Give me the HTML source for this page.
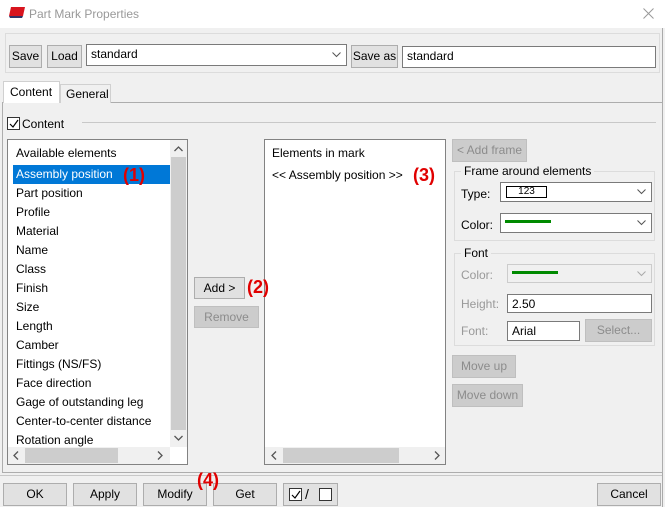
<!DOCTYPE html>
<html><head><meta charset="utf-8"><style>
*{box-sizing:border-box;margin:0;padding:0}
body{width:665px;height:507px;background:#f0f0f0;font-family:"Liberation Sans",sans-serif;font-size:12px;color:#000;position:relative;overflow:hidden}
.a{position:absolute}
.btn{position:absolute;background:#e1e1e1;border:1px solid #adadad;text-align:center;line-height:20px;font-size:12px}
.dis{background:#cccccc;border-color:#bfbfbf;color:#8c8c8c}
.inp{position:absolute;background:#fff;border:1px solid #7a7a7a;padding-left:4px;line-height:18px}
.grp{position:absolute;border:1px solid #dcdcdc}
.lg{position:absolute;background:#f0f0f0;padding:0 3px;top:-8px;left:6px}
.red{position:absolute;color:#e00000;font-weight:bold;font-size:18px;z-index:10}
.chev{position:absolute;right:5px;top:50%;margin-top:-3px}
.li{position:absolute;left:16px}
</style></head><body>
<div class="a" style="left:0;top:0;width:665px;height:28px;background:#fff"></div>
<svg class="a" style="left:8px;top:6px" width="18" height="14"><path d="M3 1 L17 1 L15 10 L1 10 Z" fill="#d8141e"/><path d="M1 10 L15 10 L14 12 L2 12 Z" fill="#336"/></svg>
<div class="a" style="left:29px;top:7px;color:#999;font-size:12px">Part Mark Properties</div>
<svg class="a" style="left:643px;top:8px" width="11" height="11"><path d="M0.5 0.5 L10.5 10.5 M10.5 0.5 L0.5 10.5" stroke="#999" stroke-width="1"/></svg>
<div class="a" style="left:662px;top:28px;width:1px;height:479px;background:#aaa"></div>

<div class="grp" style="left:5px;top:33px;width:655px;height:40px"></div>
<div class="btn" style="left:9px;top:45px;width:33px;height:23px">Save</div>
<div class="btn" style="left:47px;top:45px;width:35px;height:23px">Load</div>
<div class="inp" style="left:86px;top:44px;width:261px;height:22px">standard<svg class="chev" width="9" height="6"><path d="M0.5 0.5 L4.5 4.5 L8.5 0.5" fill="none" stroke="#555"/></svg></div>
<div class="btn" style="left:351px;top:45px;width:47px;height:23px">Save as</div>
<div class="inp" style="left:402px;top:46px;width:254px;height:22px">standard</div>

<div class="a" style="left:2px;top:102px;width:661px;height:371px;border:1px solid #adadad;background:#f0f0f0"></div>
<div class="a" style="left:60px;top:84px;width:51px;height:19px;border:1px solid #d0d0d0;border-bottom:none;background:#f0f0f0;padding-left:5px;line-height:18px">General</div>
<div class="a" style="left:3px;top:81px;width:57px;height:22px;border:1px solid #d0d0d0;border-bottom:none;background:#fff;padding-left:6px;line-height:20px">Content</div>

<div class="a" style="left:7px;top:117px;width:13px;height:13px;border:1px solid #333;background:#fff"><svg class="a" style="left:1px;top:1px" width="10" height="10"><path d="M1 5 L4 8 L9 1" fill="none" stroke="#000" stroke-width="1.2"/></svg></div>
<div class="a" style="left:22px;top:117px">Content</div>
<div class="a" style="left:82px;top:122px;width:574px;height:1px;background:#c8c8c8"></div>

<div class="a" style="left:7px;top:139px;width:181px;height:326px;border:1px solid #828282;background:#fff"></div>
<div class="a" style="left:16px;top:146px">Available elements</div>
<div class="a" style="left:13px;top:165px;width:157px;height:19px;background:#0078d7"></div>
<div class="li" style="top:167px;color:#fff">Assembly position</div>
<div class="li" style="top:186px">Part position</div>
<div class="li" style="top:205px">Profile</div>
<div class="li" style="top:224px">Material</div>
<div class="li" style="top:243px">Name</div>
<div class="li" style="top:262px">Class</div>
<div class="li" style="top:281px">Finish</div>
<div class="li" style="top:300px">Size</div>
<div class="li" style="top:319px">Length</div>
<div class="li" style="top:338px">Camber</div>
<div class="li" style="top:357px">Fittings (NS/FS)</div>
<div class="li" style="top:376px">Face direction</div>
<div class="li" style="top:395px">Gage of outstanding leg</div>
<div class="li" style="top:414px">Center-to-center distance</div>
<div class="li" style="top:433px">Rotation angle</div>
<div class="a" style="left:170px;top:140px;width:17px;height:307px;background:#f0f0f0"></div>
<div class="a" style="left:171px;top:157px;width:15px;height:273px;background:#cdcdcd"></div>
<svg class="a" style="left:174px;top:146px" width="9" height="6"><path d="M0.5 5 L4.5 1 L8.5 5" fill="none" stroke="#555" stroke-width="1.3"/></svg>
<svg class="a" style="left:174px;top:435px" width="9" height="6"><path d="M0.5 1 L4.5 5 L8.5 1" fill="none" stroke="#555" stroke-width="1.3"/></svg>
<div class="a" style="left:8px;top:447px;width:162px;height:17px;background:#f0f0f0"></div>
<div class="a" style="left:25px;top:448px;width:93px;height:15px;background:#cdcdcd"></div>
<svg class="a" style="left:13px;top:451px" width="6" height="9"><path d="M5 0.5 L1 4.5 L5 8.5" fill="none" stroke="#555" stroke-width="1.3"/></svg>
<svg class="a" style="left:157px;top:451px" width="6" height="9"><path d="M1 0.5 L5 4.5 L1 8.5" fill="none" stroke="#555" stroke-width="1.3"/></svg>
<div class="red" style="left:123px;top:165px">(1)</div>

<div class="btn" style="left:194px;top:277px;width:51px;height:22px">Add &gt;</div>
<div class="red" style="left:247px;top:277px">(2)</div>
<div class="btn dis" style="left:194px;top:306px;width:65px;height:22px">Remove</div>

<div class="a" style="left:264px;top:139px;width:182px;height:326px;border:1px solid #828282;background:#fff"></div>
<div class="a" style="left:272px;top:146px">Elements in mark</div>
<div class="a" style="left:272px;top:168px">&lt;&lt; Assembly position &gt;&gt;</div>
<div class="red" style="left:413px;top:165px">(3)</div>
<div class="a" style="left:265px;top:447px;width:180px;height:17px;background:#f0f0f0"></div>
<div class="a" style="left:283px;top:448px;width:116px;height:15px;background:#cdcdcd"></div>
<svg class="a" style="left:271px;top:451px" width="6" height="9"><path d="M5 0.5 L1 4.5 L5 8.5" fill="none" stroke="#555" stroke-width="1.3"/></svg>
<svg class="a" style="left:434px;top:451px" width="6" height="9"><path d="M1 0.5 L5 4.5 L1 8.5" fill="none" stroke="#555" stroke-width="1.3"/></svg>

<div class="btn dis" style="left:452px;top:139px;width:75px;height:23px">&lt; Add frame</div>
<div class="grp" style="left:454px;top:171px;width:201px;height:70px"><span class="lg">Frame around elements</span></div>
<div class="a" style="left:461px;top:187px">Type:</div>
<div class="inp" style="left:500px;top:182px;width:152px;height:20px"><span class="a" style="left:5px;top:3px;width:41px;height:12px;border:1px solid #000;font-size:10px;line-height:10px;text-align:center">123</span><svg class="chev" width="9" height="6"><path d="M0.5 0.5 L4.5 4.5 L8.5 0.5" fill="none" stroke="#555"/></svg></div>
<div class="a" style="left:461px;top:218px">Color:</div>
<div class="inp" style="left:500px;top:213px;width:152px;height:20px"><span class="a" style="left:4px;top:6px;width:46px;height:3px;background:#008a00"></span><svg class="chev" width="9" height="6"><path d="M0.5 0.5 L4.5 4.5 L8.5 0.5" fill="none" stroke="#555"/></svg></div>
<div class="grp" style="left:454px;top:253px;width:201px;height:93px"><span class="lg">Font</span></div>
<div class="a" style="left:461px;top:268px;color:#999">Color:</div>
<div class="inp" style="left:507px;top:264px;width:145px;height:19px;border-color:#ccc;background:#f0f0f0"><span class="a" style="left:4px;top:6px;width:46px;height:3px;background:#008a00"></span><svg class="chev" width="9" height="6"><path d="M0.5 0.5 L4.5 4.5 L8.5 0.5" fill="none" stroke="#aaa"/></svg></div>
<div class="a" style="left:461px;top:297px;color:#999">Height:</div>
<div class="inp" style="left:507px;top:294px;width:145px;height:19px">2.50</div>
<div class="a" style="left:461px;top:324px;color:#999">Font:</div>
<div class="inp" style="left:507px;top:321px;width:73px;height:20px">Arial</div>
<div class="btn dis" style="left:585px;top:319px;width:67px;height:23px">Select...</div>
<div class="btn dis" style="left:452px;top:355px;width:64px;height:23px">Move up</div>
<div class="btn dis" style="left:452px;top:384px;width:71px;height:23px">Move down</div>

<div class="a" style="left:0;top:475px;width:662px;height:1px;background:#c8c8c8"></div>
<div class="btn" style="left:3px;top:483px;width:64px;height:23px">OK</div>
<div class="btn" style="left:73px;top:483px;width:64px;height:23px">Apply</div>
<div class="btn" style="left:143px;top:483px;width:64px;height:23px">Modify</div>
<div class="btn" style="left:213px;top:483px;width:64px;height:23px">Get</div>
<div class="red" style="left:197px;top:470px">(4)</div>
<div class="btn" style="left:283px;top:483px;width:55px;height:23px"><span class="a" style="left:5px;top:4px;width:13px;height:13px;border:1px solid #333;background:#fff"><svg class="a" style="left:1px;top:1px" width="10" height="10"><path d="M1 5 L4 8 L9 1" fill="none" stroke="#000" stroke-width="1.2"/></svg></span><span class="a" style="left:21px;top:0;font-size:14px">/</span><span class="a" style="left:35px;top:4px;width:13px;height:13px;border:1px solid #333;background:#fff"></span></div>
<div class="btn" style="left:597px;top:483px;width:64px;height:23px">Cancel</div>
</body></html>
